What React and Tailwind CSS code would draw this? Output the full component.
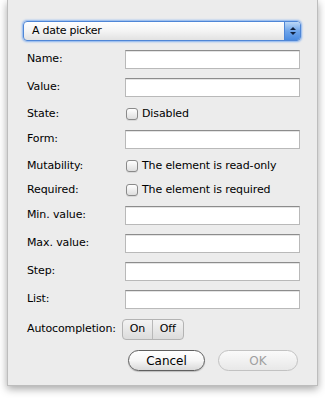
const font = { fontFamily: '"DejaVu Sans", "Liberation Sans", sans-serif' };

const Field = () => (
  <div className="w-[175px] h-[19px] bg-white border border-[#b9b9b9] border-t-[#8c8c8c] shadow-[inset_0_1px_0_#e4e4e4]" />
);

const Checkbox = ({ label }) => (
  <div className="flex items-center ml-px">
    <div className="w-[12px] h-[12px] rounded-[3px] border border-[#8a8a8a] bg-gradient-to-b from-white to-[#dedede] shadow-[0_1px_0_rgba(0,0,0,0.08)]" />
    <span className="ml-[4px]">{label}</span>
  </div>
);

const Row = ({ label, className, children }) => (
  <div className={"flex items-center " + className}>
    <div className="w-[98px] shrink-0">{label}</div>
    {children}
  </div>
);

const App = () => {
  return (
    <div className="w-[325px] h-[398px] bg-white text-[11px] tracking-[-0.12px] text-black" style={font}>
      <div className="ml-[7px] w-[311px] h-[386px] bg-[#ececec] border-x border-b border-[#bdbdbd] shadow-[0_3px_8px_rgba(0,0,0,0.35)] flex flex-col">
        <div className="ml-[15px] mt-[21px] w-[278px] h-[20px] rounded-[4px] border border-[#4f86d6] shadow-[0_0_2px_1px_#86b2f0] bg-gradient-to-b from-white via-[#f4f4f4] to-[#e2e2e2] flex items-center overflow-hidden">
          <span className="ml-[8px] flex-1 tracking-[-0.25px]">A date picker</span>
          <div className="w-[16px] h-full bg-gradient-to-b from-[#bcd7f6] via-[#6fa5ea] to-[#4a8be0] border-l border-[#4f86d6] flex flex-col items-center justify-center gap-[2px]">
            <div className="w-0 h-0 border-x-[3px] border-x-transparent border-b-[3px] border-b-[#10213d]" />
            <div className="w-0 h-0 border-x-[3px] border-x-transparent border-t-[3px] border-t-[#10213d]" />
          </div>
        </div>

        <div className="ml-[19px] flex flex-col">
          <Row label="Name:" className="mt-[9px] h-[19px]"><Field /></Row>
          <Row label="Value:" className="mt-[9px] h-[19px]"><Field /></Row>
          <Row label="State:" className="mt-[9px] h-[16px]"><Checkbox label="Disabled" /></Row>
          <Row label="Form:" className="mt-[8px] h-[19px]"><Field /></Row>
          <Row label="Mutability:" className="mt-[9px] h-[16px]"><Checkbox label="The element is read-only" /></Row>
          <Row label="Required:" className="mt-[8px] h-[16px]"><Checkbox label="The element is required" /></Row>
          <Row label="Min. value:" className="mt-[8px] h-[19px]"><Field /></Row>
          <Row label="Max. value:" className="mt-[9px] h-[19px]"><Field /></Row>
          <Row label="Step:" className="mt-[9px] h-[19px]"><Field /></Row>
          <Row label="List:" className="mt-[9px] h-[19px]"><Field /></Row>

          <div className="flex items-center mt-[10px] h-[21px]">
            <span>Autocompletion:</span>
            <div className="ml-[6px] flex h-[21px] rounded-[4px] border border-[#b3b3b3] bg-gradient-to-b from-[#f3f3f3] to-[#dcdcdc] overflow-hidden">
              <div className="w-[30px] flex items-center justify-center border-r border-[#b8b8b8]">On</div>
              <div className="w-[30px] flex items-center justify-center">Off</div>
            </div>
          </div>

          <div className="flex mt-[10px] ml-[101px] gap-[13px] text-[12px] tracking-normal">
            <button className="w-[77px] h-[21px] rounded-full border border-[#5f5f5f] bg-gradient-to-b from-white via-[#f6f6f6] to-[#dadada] shadow-[0_1px_1px_rgba(0,0,0,0.2)] flex items-center justify-center">
              Cancel
            </button>
            <button className="w-[80px] h-[21px] rounded-full border border-[#c2c2c2] bg-gradient-to-b from-[#fafafa] to-[#e8e8e8] text-[#a0a0a0] flex items-center justify-center">
              OK
            </button>
          </div>
        </div>
      </div>
    </div>
  );
};

export default App;
